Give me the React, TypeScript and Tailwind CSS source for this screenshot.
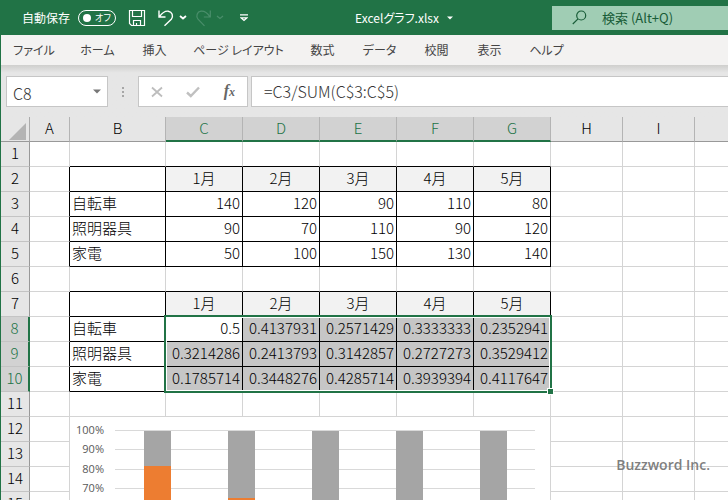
import { useState } from "react"
import clsx from "clsx"

const COLUMNS = ["A", "B", "C", "D", "E", "F", "G", "H", "I", "J"]
const COLUMN_COUNT = COLUMNS.length
const ROW_COUNT = 20

const MONTHS = ["1月", "2月", "3月", "4月", "5月"]

const CELLS: Record<number, string[]> = {
  2: ["", ...MONTHS],
  3: ["自転車", "140", "120", "90", "110", "80"],
  4: ["照明器具", "90", "70", "110", "90", "120"],
  5: ["家電", "50", "100", "150", "130", "140"],
  7: ["", ...MONTHS],
  8: ["自転車", "0.5", "0.4137931", "0.2571429", "0.3333333", "0.2352941"],
  9: ["照明器具", "0.3214286", "0.2413793", "0.3142857", "0.2727273", "0.3529412"],
  10: ["家電", "0.1785714", "0.3448276", "0.4285714", "0.3939394", "0.4117647"],
}

const TABS = [
  { label: "ファイル", width: "w-[38px]" },
  { label: "ホーム", width: "w-[33px]" },
  { label: "挿入", width: "w-[25px]" },
  { label: "ページ レイアウト", width: "w-[87px]" },
  { label: "数式", width: "w-[25px]" },
  { label: "データ", width: "w-[33px]" },
  { label: "校閲", width: "w-[25px]" },
  { label: "表示", width: "w-[25px]" },
  { label: "ヘルプ", width: "w-[33px]" },
]

// tables span B:G, rows 2-5 and 7-10
const inTable = (row: number, col: number) => row in CELLS && col >= 1 && col <= 6
const isSelected = (row: number, col: number) => row >= 8 && row <= 10 && col >= 2 && col <= 6

function TitleBar() {
  const [autoSave, setAutoSave] = useState(false)

  return (
    <header className="flex h-[35px] shrink-0 items-center bg-[#217346] text-[13px] text-white">
      <div className="flex shrink-0 items-center pl-[21px]">
        <label htmlFor="autosave" className="text-[12px] leading-4">自動保存</label>
        <span className="relative ml-2 flex h-4 w-[38px] items-center rounded-full border border-white">
          <input
            id="autosave"
            type="checkbox"
            role="switch"
            checked={autoSave}
            onChange={(e) => setAutoSave(e.target.checked)}
            className="absolute inset-0 cursor-pointer appearance-none rounded-full"
          />
          <span className="ml-1 h-2 w-2 shrink-0 rounded-full bg-white" />
          <span className="ml-1 text-[9px] leading-3 whitespace-nowrap [font-feature-settings:'palt']">オフ</span>
        </span>
        <button aria-label="上書き保存" className="ml-3">
          <svg width="18" height="18" viewBox="0 0 18 18" fill="none" stroke="currentColor" strokeWidth="1.2">
            <path d="M1.5 1.5h15v15h-13l-2-2z" />
            <path d="M4.5 1.5v6h9v-6M5.5 16.5v-5h7v5M8.5 16.5v-2.500" />
          </svg>
        </button>
        <button aria-label="元に戻す" className="ml-3 flex items-center gap-1">
          <svg width="17" height="18" viewBox="0 0 17 18" fill="none" stroke="currentColor" strokeWidth="1.4">
            <path d="M1 1.500v6.500h6.500M1.300 7.800C4.500 3.500 7.500 1.800 10.300 2.200c4 .6 5.300 5 3 8L6.500 16.800" />
          </svg>
          <svg width="8" height="5" viewBox="0 0 8 5" fill="none" stroke="currentColor" strokeWidth="1.800">
            <path d="M1 1l3 2.500L7 1" />
          </svg>
        </button>
        <button aria-label="やり直し" className="ml-2 flex items-center gap-1 text-[#4a8e6b]">
          <svg width="17" height="18" viewBox="0 0 17 18" fill="none" stroke="currentColor" strokeWidth="1.2">
            <path d="M15.300 1.500v6.500H8.800M15 7.800C12 3.500 9 1.800 6 2.200c-4 .6-5.300 5-3 8l6.500 6.600" />
          </svg>
          <svg width="8" height="5" viewBox="0 0 8 5" fill="none" stroke="currentColor" strokeWidth="1.2">
            <path d="M1 1l3 2.500L7 1" />
          </svg>
        </button>
        <button aria-label="クイック アクセス ツール バーのユーザー設定" className="ml-4">
          <svg width="8" height="8" viewBox="0 0 8 8" fill="none" stroke="currentColor" strokeWidth="1.200">
            <path d="M0 .8h8M1 3.800l3 2.700 3-2.700z" />
          </svg>
        </button>
      </div>

      <div className="flex min-w-0 flex-1 items-center justify-center pl-2">
        <button className="flex items-center gap-2 text-[12px] leading-4 whitespace-nowrap [font-feature-settings:'palt']">
          Excelグラフ.xlsx
          <svg width="6" height="4" viewBox="0 0 6 4" fill="currentColor">
            <path d="M0 .5h6L3 3.500z" />
          </svg>
        </button>
      </div>

      <label className="flex h-6 w-44 shrink-0 items-center bg-[#a0cdb4] pl-5 text-[#185c37]">
        <svg width="15" height="15" viewBox="0 0 15 15" fill="none" stroke="currentColor" strokeWidth="1.200">
          <circle cx="9.200" cy="5.500" r="4.500" />
          <path d="M6 8.800L.8 14" />
        </svg>
        <input
          aria-label="検索"
          placeholder="検索 (Alt+Q)"
          className="ml-[15px] w-24 bg-transparent text-[13px] outline-none placeholder:text-[#185c37]"
        />
      </label>
    </header>
  )
}

function RibbonTabs() {
  return (
    <nav className="flex h-[30px] shrink-0 items-center gap-7 bg-[#f3f2f1] pl-[14px] text-[12px] text-[#444444]">
      {TABS.map((tab) => (
        <button
          key={tab.label}
          className={clsx(
            "flex shrink-0 justify-center leading-5 whitespace-nowrap [font-feature-settings:'palt']",
            tab.width,
          )}
        >
          {tab.label}
        </button>
      ))}
    </nav>
  )
}

function FormulaBar() {
  return (
    <div className="flex h-[52px] shrink-0 bg-linear-to-b from-[#cfcfcd] to-[#e6e6e6] to-15% pt-[11px] pb-[10px] pl-[5px] font-light text-[#333333]">
      <div className="flex w-[102px] shrink-0 items-center border border-[#c6c6c6] bg-white pr-[6px] pl-[6px]">
        <input aria-label="名前ボックス" defaultValue="C8" className="min-w-0 flex-1 pt-[2px] text-[16px] leading-6 outline-none" />
        <button aria-label="名前の一覧">
          <svg width="8" height="5" viewBox="0 0 8 5" fill="#777777">
            <path d="M0 .5h8L4 4.500z" />
          </svg>
        </button>
      </div>
      <div className="flex w-[30px] shrink-0 flex-col items-center justify-center gap-[2px]">
        <span className="h-[2px] w-[2px] bg-[#a6a6a6]" />
        <span className="h-[2px] w-[2px] bg-[#a6a6a6]" />
        <span className="h-[2px] w-[2px] bg-[#a6a6a6]" />
      </div>
      <div className="flex w-[110px] shrink-0 items-center justify-between border border-[#c6c6c6] bg-white px-3">
        <button aria-label="キャンセル">
          <svg width="12" height="12" viewBox="0 0 12 12" fill="none" stroke="#bdbdbd" strokeWidth="1.800">
            <path d="M1 1.500l10 9M11 1.500l-10 9" />
          </svg>
        </button>
        <button aria-label="入力">
          <svg width="14" height="12" viewBox="0 0 14 12" fill="none" stroke="#c0c0c0" strokeWidth="2.400">
            <path d="M1 6.500l3.800 3.500L13 1.500" />
          </svg>
        </button>
        <button
          aria-label="関数の挿入"
          className="font-['Liberation_Serif',serif] text-[16px] leading-4 font-bold text-[#666666] italic"
        >
          f<span className="text-[12px]">x</span>
        </button>
      </div>
      <input
        aria-label="数式バー"
        defaultValue="=C3/SUM(C$3:C$5)"
        className="ml-[3px] min-w-0 flex-1 border border-r-0 border-[#c6c6c6] bg-white pb-[2px] pl-3 text-[16px] leading-6 outline-none"
      />
    </div>
  )
}

function Cell({ row, col }: { row: number; col: number }) {
  const framed = inTable(row, col)
  const value = framed ? CELLS[row][col - 1] : ""
  const heading = framed && col > 1 && (row === 2 || row === 7)
  const selected = isSelected(row, col)
  const active = row === 8 && col === 2

  return (
    <td
      className={clsx(
        "h-[25px] overflow-hidden border-r border-b px-[2px] pt-0 pb-[2px] leading-5 whitespace-nowrap",
        framed || inTable(row, col + 1) ? "border-r-black" : "border-r-[#d4d4d4]",
        framed || inTable(row + 1, col) ? "border-b-black" : "border-b-[#d4d4d4]",
        heading ? "bg-[#f2f2f2] text-center" : selected && !active ? "bg-[#c6c6c6]" : "bg-white",
        !heading && (col > 1 ? "text-right" : "text-left"),
      )}
    >
      {value}
    </td>
  )
}

function Chart() {
  const rows = [3, 4, 5].map((r) => CELLS[r].slice(1).map(Number))
  const colors = ["#4472c4", "#ed7d31", "#a5a5a5"]
  const top = 14
  const height = 194

  const bars = MONTHS.map((month, i) => {
    const total = rows.reduce((sum, r) => sum + r[i], 0)
    let base = 0
    return rows.map((r, s) => {
      const share = r[i] / total
      const y = top + height * (1 - base - share)
      base += share
      return <rect key={month + s} x={74 + i * 84} y={y} width="27" height={share * height} fill={colors[s]} />
    })
  })

  return (
    <svg
      className="absolute top-[300px] left-[69px] bg-white font-normal"
      width="480"
      height="240"
      viewBox="0 0 480 240"
      shapeRendering="crispEdges"
    >
      {Array.from({ length: 11 }, (_, i) => {
        const y = Math.round(top + (height / 10) * i)
        return (
          <g key={i}>
            <rect x="45" y={y - 1} width="420" height="1" fill="#d9d9d9" />
            <text
              x="34"
              y={y + 3}
              textAnchor="end"
              fill="#595959"
              className="font-['Open_Sans',sans-serif] text-[11px]"
            >
              {100 - i * 10}%
            </text>
          </g>
        )
      })}
      {bars}
    </svg>
  )
}

function Sheet() {
  return (
    <main className="relative min-h-0 flex-1 overflow-hidden bg-white text-[15px] font-light text-black">
      <table className="w-[790px] table-fixed border-separate border-spacing-0">
        <colgroup>
          <col className="w-[29px]" />
          <col className="w-[40px]" />
          <col className="w-[96px]" />
          <col className="w-[77px]" span={5} />
          <col className="w-[72px]" span={2} />
          <col className="w-[96px]" />
        </colgroup>
        <thead>
          <tr>
            <th className="h-[25px] border-r border-b border-r-[#ababab] border-b-[#999999] bg-[#e6e6e6] p-0">
              <svg className="mt-1 ml-2" width="17" height="17" viewBox="0 0 17 17" fill="#b4b4b4">
                <path d="M17 0v17H0z" />
              </svg>
            </th>
            {COLUMNS.map((name, i) => (
              <th
                key={name}
                scope="col"
                className={clsx(
                  "h-[25px] border-r border-r-[#b4b4b4] px-0 pt-0 leading-5 font-light",
                  i >= 2 && i <= 6
                    ? "border-b-2 border-b-[#217346] bg-[#d2d2d2] pb-px text-[#217346]"
                    : "border-b border-b-[#999999] bg-[#e6e6e6] pb-[2px]",
                )}
              >
                {name}
              </th>
            ))}
          </tr>
        </thead>
        <tbody>
          {Array.from({ length: ROW_COUNT }, (_, i) => i + 1).map((row) => (
            <tr key={row}>
              <th
                scope="row"
                className={clsx(
                  "h-[25px] border-b border-b-[#c4c4c4] px-0 pt-0 pb-[2px] leading-5 font-light",
                  row >= 8 && row <= 10
                    ? "border-r-2 border-r-[#217346] bg-[#d2d2d2] text-[#217346]"
                    : "border-r border-r-[#999999] bg-[#e6e6e6]",
                )}
              >
                {row}
              </th>
              {Array.from({ length: COLUMN_COUNT }, (_, col) => (
                <Cell key={col} row={row} col={col} />
              ))}
            </tr>
          ))}
        </tbody>
      </table>

      {/* selection frame around C8:G10 */}
      <div className="pointer-events-none absolute top-[198px] left-[163px] h-[78px] w-[388px] border-2 border-[#217346]">
        <div className="h-full border border-white" />
        <div className="absolute -right-1 -bottom-1 h-[7px] w-[7px] border border-white bg-[#217346]" />
      </div>

      <Chart />
    </main>
  )
}

export default function App() {
  return (
    <div className="relative flex h-screen flex-col overflow-hidden border-l border-[#217346] font-['Noto_Sans_CJK_JP',sans-serif]">
      <TitleBar />
      <RibbonTabs />
      <FormulaBar />
      <Sheet />
      <p className="absolute right-[18px] bottom-[25px] font-['Open_Sans',sans-serif] text-[14px] leading-5 font-semibold text-[#7f7f7f]">
        Buzzword Inc.
      </p>
    </div>
  )
}
